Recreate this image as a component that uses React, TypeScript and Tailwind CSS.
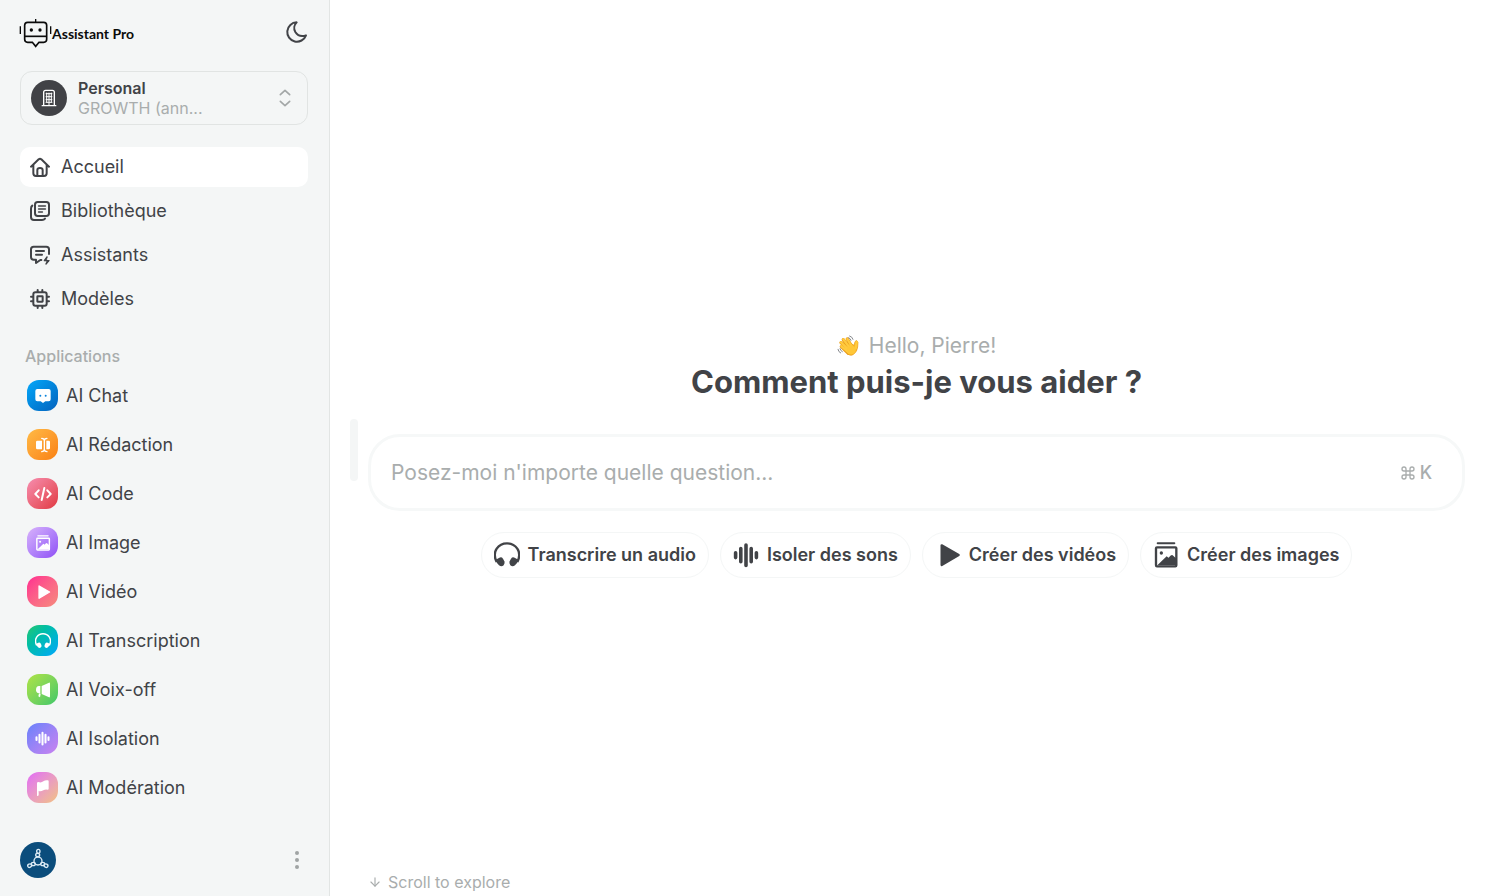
import type { ReactNode } from 'react';
import { ArrowDown, Command } from 'lucide-react';

const HeadphonesIcon = ({ className }: { className: string }) => (
  <svg viewBox="0 0 78 78" className={className} fill="currentColor" aria-hidden="true">
    <path d="M8 60C-8 28 14 4 39 4S86 28 70 60" fill="none" stroke="currentColor" strokeWidth="7" />
    <path d="M4 54L16 47Q23 44 27 50L31 58Q34 65 29 70Q22 76 15 70Q8 63 4 54Z" />
    <path d="M74 54L62 47Q55 44 51 50L47 58Q44 65 49 70Q56 76 63 70Q70 63 74 54Z" />
  </svg>
);

const SoundIcon = ({ className }: { className: string }) => (
  <svg viewBox="0 0 80 80" className={className} stroke="currentColor" strokeWidth="11" strokeLinecap="round" aria-hidden="true">
    <path d="M8 33v15M24 20v41M40 9v63M56 20v41M72 33v15" />
  </svg>
);

const PlayIcon = ({ className }: { className: string }) => (
  <svg viewBox="0 0 78 78" className={className} fill="currentColor" aria-hidden="true">
    <path d="M20 10L71 39L20 69Z" stroke="currentColor" strokeWidth="7" strokeLinejoin="round" />
  </svg>
);

const PicturesIcon = ({ className }: { className: string }) => (
  <svg viewBox="0 0 78 78" className={className} fill="currentColor" aria-hidden="true">
    <path d="M14 4H64" stroke="currentColor" strokeWidth="6" strokeLinecap="round" />
    <rect x="9" y="16" width="61" height="57" rx="3" fill="none" stroke="currentColor" strokeWidth="7" />
    <circle cx="25" cy="33" r="5" />
    <path d="M13 70L41 43Q45 47 47 47Q54 37 59 40L72 52V70Z" />
  </svg>
);

const MoonIcon = () => (
  <svg viewBox="0 0 72 72" className="h-6 w-6" fill="none" stroke="currentColor" strokeWidth="6" strokeLinejoin="round" aria-hidden="true">
    <path d="M38 7A29 29 0 1 0 66 46C54 50 41 47 34 36C28 26 31 14 38 7Z" />
  </svg>
);

const Logo = () => (
  <svg viewBox="57 57 99 93" className="h-[31px] w-[33px]" fill="none" stroke="#0b0b0b" strokeWidth="5" aria-hidden="true">
    <path d="M107 60V70M61 82V105M152 82V105" strokeWidth="4" />
    <path d="M83 70H131Q140 70 140 79V121Q140 130 131 130H117L107 142L97 130H83Q74 130 74 121V79Q74 70 83 70Z" />
    <path d="M74 112H140" />
    <g fill="#0b0b0b" stroke="none">
      <circle cx="94" cy="93" r="5" />
      <circle cx="120" cy="93" r="5" />
    </g>
  </svg>
);

const WaveHand = () => (
  <svg viewBox="0 0 64 66" className="h-[22px] w-[22px]" fill="none" strokeLinecap="round" aria-hidden="true">
    <g stroke="#e89b1c" strokeWidth="10">
      <path d="M33 55L12 35M32 44L11 23M36 38L18 14M44 36L30 12" />
    </g>
    <path d="M24 48Q35 66 47 59Q60 51 61 36L62 22Q58 12 53 20L50 31L39 24Z" fill="#fcb827" stroke="#e89b1c" strokeWidth="2" />
    <g stroke="#ffca3d" strokeWidth="7">
      <path d="M35 53L12 34M36 46L11 22M40 42L18 13M46 39L30 12M55 40L58 21" />
    </g>
    <circle cx="42" cy="45" r="13" fill="#ffc737" />
    <g stroke="#85888c" strokeWidth="3">
      <path d="M37 3Q45 5 47 13M34 8Q39 10 41 16M2 43Q3 51 10 54M8 41Q9 47 15 50" />
    </g>
  </svg>
);

const NavSvg = ({ children }: { children: ReactNode }) => (
  <svg viewBox="0 0 60 60" className="h-5 w-5" fill="none" stroke="currentColor" strokeWidth="6" strokeLinecap="round" strokeLinejoin="round" aria-hidden="true">
    {children}
  </svg>
);

const navigation = [
  {
    label: 'Accueil',
    active: true,
    icon: (
      <NavSvg>
        <path d="M3 29L26 7Q30 4 34 7L57 29M10 24V49Q10 57 18 57H42Q50 57 50 49V24" />
        <path d="M22 56V39Q22 33 30 33Q38 33 38 39V56" />
      </NavSvg>
    ),
  },
  {
    label: 'Bibliothèque',
    icon: (
      <NavSvg>
        <rect x="15" y="3" width="42" height="42" rx="8" />
        <path d="M26 15H46M26 24H46M26 33H37" strokeWidth="5" />
        <path d="M7 14Q3 17 3 23V48Q3 57 12 57H36Q42 57 45 53" />
      </NavSvg>
    ),
  },
  {
    label: 'Assistants',
    icon: (
      <NavSvg>
        <path d="M57 27V13Q57 5 49 5H11Q3 5 3 13V36Q3 44 11 44H18V54L31 45H34M18 18H42M18 29H36" />
        <path d="M51 36L43 47H57L48 57" strokeWidth="4" />
        <path d="M51 36L43 47H57L48 57L50 47Z" fill="currentColor" strokeWidth="1" />
      </NavSvg>
    ),
  },
  {
    label: 'Modèles',
    icon: (
      <NavSvg>
        <rect x="10" y="10" width="40" height="40" rx="6" />
        <rect x="22" y="22" width="16" height="16" rx="1" />
        <path d="M23 3V9M37 3V9M23 51V57M37 51V57M3 23H9M3 37H9M51 23H57M51 37H57" />
      </NavSvg>
    ),
  },
];

const applications = [
  {
    label: 'AI Chat',
    tile: 'from-[#05a8fa] to-[#0562bd]',
    icon: (
      <svg viewBox="0 0 48 48" className="h-4 w-4" aria-hidden="true">
        <path d="M7 3H41Q47 3 47 9V34Q47 40 41 40H31L24 45L17 40H7Q1 40 1 34V9Q1 3 7 3Z" fill="white" />
        <circle cx="16" cy="23" r="3" fill="#0a84dc" />
        <circle cx="32" cy="23" r="3" fill="#0a84dc" />
      </svg>
    ),
  },
  {
    label: 'AI Rédaction',
    tile: 'from-[#ffba45] to-[#f9800f]',
    icon: (
      <svg viewBox="0 0 48 48" className="h-4 w-4" fill="white" aria-hidden="true">
        <path d="M7 11H21V37H7Q3 37 3 33V15Q3 11 7 11ZM34 11H41Q45 11 45 15V33Q45 37 41 37H34Z" />
        <path d="M20 4Q28 4 28 11V37Q28 44 20 44M36 4Q28 4 28 11V37Q28 44 36 44" fill="none" stroke="white" strokeWidth="4" strokeLinecap="round" />
      </svg>
    ),
  },
  {
    label: 'AI Code',
    tile: 'from-[#f68db0] to-[#e03540]',
    icon: (
      <svg viewBox="0 0 54 48" className="h-4 w-[18px]" fill="none" stroke="white" strokeWidth="6" strokeLinecap="round" strokeLinejoin="round" aria-hidden="true">
        <path d="M14 13L4 24L14 34M40 13L50 24L40 34M31 6L23 42" />
      </svg>
    ),
  },
  { label: 'AI Image', tile: 'from-[#d9b2fb] to-[#904df5]', icon: <PicturesIcon className="h-4 w-4" /> },
  { label: 'AI Vidéo', tile: 'from-[#ff2590] to-[#f58a7c]', icon: <PlayIcon className="h-4 w-4" /> },
  { label: 'AI Transcription', tile: 'from-[#23c66c] to-[#05a6fb]', icon: <HeadphonesIcon className="h-4 w-4" /> },
  {
    label: 'AI Voix-off',
    tile: 'from-[#aee344] to-[#38c768]',
    icon: (
      <svg viewBox="0 0 48 48" className="h-4 w-4" fill="white" aria-hidden="true">
        <path d="M20 12L42 2Q45 1 45 5V43Q45 47 42 46L20 36Z" />
        <path d="M16 12V34H12Q3 33 3 23Q3 13 12 12Z" />
        <path d="M12 34L17 35L15 46L10 43Z" />
      </svg>
    ),
  },
  { label: 'AI Isolation', tile: 'from-[#6681fb] to-[#c982f0]', icon: <SoundIcon className="h-[15px] w-[15px]" /> },
  {
    label: 'AI Modération',
    tile: 'from-[#e268f6] to-[#f2c17e]',
    icon: (
      <svg viewBox="0 0 48 48" className="h-4 w-4" fill="white" aria-hidden="true">
        <path d="M6 10Q6 6 10 6Q19 9 25 4Q31 0 38 1Q41 1 41 4V26Q41 29 38 29Q31 27 25 31Q18 35 11 33V45Q11 48 6 48Z" />
      </svg>
    ),
  },
];

const suggestions = [
  { label: 'Transcrire un audio', icon: <HeadphonesIcon className="h-[26px] w-[26px]" /> },
  { label: 'Isoler des sons', icon: <SoundIcon className="h-[26px] w-[26px]" /> },
  { label: 'Créer des vidéos', icon: <PlayIcon className="h-[26px] w-[26px]" /> },
  { label: 'Créer des images', icon: <PicturesIcon className="h-[26px] w-[26px]" /> },
];

const Sidebar = () => (
  <aside className="flex w-[330px] shrink-0 flex-col border-r border-[#e2e5e4] bg-[#f4f6f6] py-[18px] pr-[21px] pl-5">
    <div className="flex h-[31px] items-center justify-between">
      <a href="#" className="-ml-px flex items-center font-['Lato',sans-serif] text-sm font-bold text-[#0b0b0b]">
        <Logo />
        <span>Assistant Pro</span>
      </a>
      <button type="button" aria-label="Thème sombre" className="self-start pt-0.5">
        <MoonIcon />
      </button>
    </div>

    <button type="button" className="mt-[22px] flex h-[54px] items-center rounded-xl border border-[#e1e4e3] px-2.5 text-left">
      <span className="mr-[11px] flex h-9 w-9 items-center justify-center rounded-full bg-[#414246] text-white">
        <svg viewBox="0 0 48 54" className="h-[18px] w-4" fill="none" stroke="currentColor" strokeWidth="4" aria-hidden="true">
          <path d="M2 50H46M8 50V10Q8 4 14 4H34Q40 4 40 10V50" />
          <path d="M17 11V40M24 11V50M31 11V40M14 14H34M14 23H34M14 32H34M14 40H34" strokeWidth="3" />
        </svg>
      </span>
      <span className="flex-1 text-base leading-5">
        <span className="block font-semibold">Personal</span>
        <span className="block text-[#a9adad]">GROWTH (ann...</span>
      </span>
      <svg viewBox="0 0 36 54" className="mr-1.5 h-[18px] w-3" fill="none" stroke="#a3a7a7" strokeWidth="5" strokeLinecap="round" strokeLinejoin="round" aria-hidden="true">
        <path d="M4 17L18 4L32 17M4 37L18 50L32 37" />
      </svg>
    </button>

    <nav className="mt-[22px] flex flex-col gap-1 text-lg">
      {navigation.map((item) => (
        <a
          key={item.label}
          href="#"
          className={`flex h-10 items-center gap-[11px] rounded-[10px] px-2.5 ${item.active ? 'bg-white' : ''}`}
        >
          {item.icon}
          {item.label}
        </a>
      ))}
    </nav>

    <h2 className="mt-[25px] pl-[5px] text-base leading-6 font-medium text-[#a9adad]">Applications</h2>
    <ul className="mt-[3px] text-lg">
      {applications.map((app) => (
        <li key={app.label}>
          <a href="#" className="flex h-[49px] items-center gap-2 pl-[7px]">
            <span className={`flex h-[31px] w-[31px] items-center justify-center rounded-xl bg-linear-to-br text-white ${app.tile}`}>
              {app.icon}
            </span>
            {app.label}
          </a>
        </li>
      ))}
    </ul>

    <div className="mt-auto flex items-center justify-between">
      <button type="button" aria-label="Profil" className="rounded-full bg-[#0b4d7c]">
        <svg viewBox="0 0 108 108" className="h-9 w-9" fill="none" stroke="#dcebf5" strokeWidth="4" aria-hidden="true">
          <circle cx="54" cy="57" r="12" />
          <ellipse cx="55" cy="28" rx="5" ry="6" />
          <ellipse cx="53" cy="39" rx="6" ry="5" />
          <ellipse cx="29" cy="71" rx="6" ry="5" transform="rotate(-25 29 71)" />
          <ellipse cx="40" cy="66" rx="6" ry="5" />
          <ellipse cx="78" cy="71" rx="6" ry="5" transform="rotate(25 78 71)" />
          <ellipse cx="68" cy="66" rx="6" ry="5" />
        </svg>
      </button>
      <button type="button" aria-label="Plus d'options" className="mr-[5px]">
        <svg viewBox="0 0 12 20" className="h-5 w-3" fill="#a0a4a4" aria-hidden="true">
          <circle cx="6" cy="3" r="2" />
          <circle cx="6" cy="10" r="2" />
          <circle cx="6" cy="17" r="2" />
        </svg>
      </button>
    </div>
  </aside>
);

const Home = () => (
  <main className="flex flex-1 gap-2.5 pr-[35px] pl-5">
    <div className="mt-1 h-[62px] w-2 self-center rounded-full bg-[#f4f6f6]" />
    <div className="flex flex-1 flex-col">
      <div className="flex flex-1 flex-col items-center justify-center pt-11">
        <p className="flex items-center gap-2.5 text-[21px] leading-6 text-[#a9adad]">
          <WaveHand />
          Hello, Pierre!
        </p>
        <h1 className="mt-1 text-[31px] leading-10 font-bold">Comment puis-je vous aider ?</h1>

        <label className="mt-8 flex h-[77px] w-full items-center rounded-[32px] border-3 border-[#f6f8f8] pr-[30px] pl-5 text-[#a9adad]">
          <input
            type="text"
            aria-label="Question"
            placeholder="Posez-moi n'importe quelle question..."
            className="flex-1 text-[21px] text-[#414347] outline-none placeholder:text-[#a9adad]"
          />
          <kbd className="flex items-center gap-1 font-['Inter',sans-serif] text-lg font-medium">
            <Command className="h-4 w-4" />K
          </kbd>
        </label>

        <div className="mt-[21px] flex flex-wrap justify-center gap-[11px]">
          {suggestions.map((item) => (
            <button
              key={item.label}
              type="button"
              className="flex h-[46px] items-center gap-2 rounded-full border border-[#f4f6f6] px-3 text-lg font-semibold"
            >
              {item.icon}
              {item.label}
            </button>
          ))}
        </div>
      </div>

      <button type="button" className="flex h-7 items-center gap-1.5 text-base text-[#a9adad]">
        <ArrowDown className="h-3.5 w-3.5" />
        Scroll to explore
      </button>
    </div>
  </main>
);

export default function App() {
  return (
    <div className="flex min-h-screen bg-white font-['Inter',sans-serif] text-[#414347]">
      <Sidebar />
      <Home />
    </div>
  );
}
